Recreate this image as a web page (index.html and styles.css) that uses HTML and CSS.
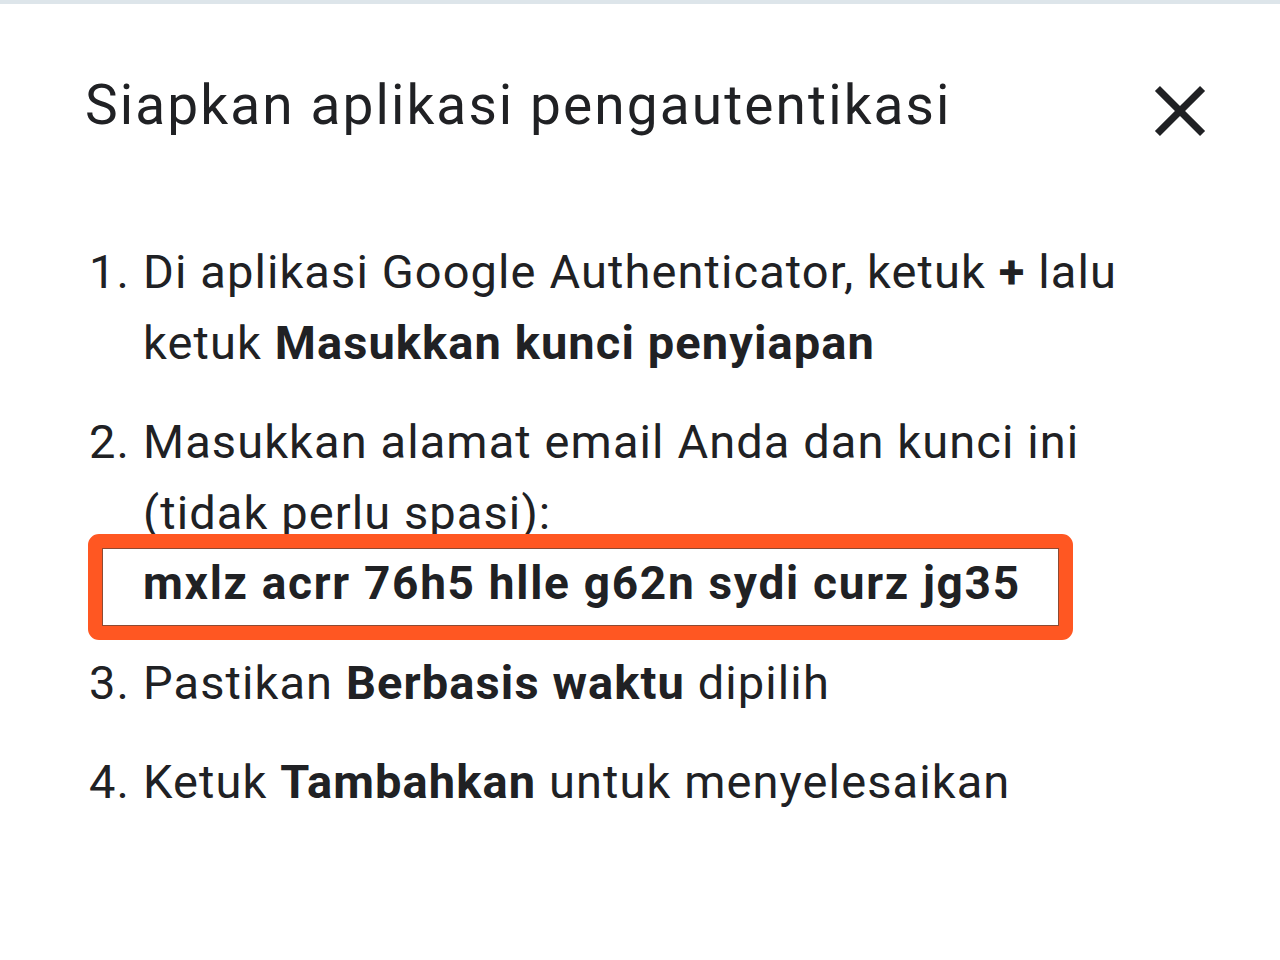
FILE: index.html
```html
<!DOCTYPE html>
<html lang="id">
<head>
<meta charset="utf-8">
<title>Siapkan aplikasi pengautentikasi</title>
<link rel="stylesheet" href="styles.css">
</head>
<body>
<div class="topline"></div>
<div class="dialog">
  <div class="header">
    <h1 class="title">Siapkan aplikasi pengautentikasi</h1>
    <button class="close" aria-label="Tutup">
      <svg viewBox="0 0 24 24" width="86" height="86"><path fill="#202124" d="M19 6.41L17.59 5 12 10.59 6.41 5 5 6.41 10.59 12 5 17.59 6.41 19 12 13.41 17.59 19 19 17.59 13.41 12z"/></svg>
    </button>
  </div>
  <ol class="steps">
    <li class="step"><span class="num">1.</span><div class="txt">Di aplikasi Google Authenticator, ketuk <b>+</b> lalu ketuk <b>Masukkan kunci penyiapan</b></div></li>
    <li class="step"><span class="num">2.</span><div class="txt">Masukkan alamat email Anda dan kunci ini (tidak perlu spasi):<div class="key">mxlz acrr 76h5 hlle g62n sydi curz jg35</div></div></li>
    <li class="step"><span class="num">3.</span><div class="txt">Pastikan <b>Berbasis waktu</b> dipilih</div></li>
    <li class="step"><span class="num">4.</span><div class="txt">Ketuk <b>Tambahkan</b> untuk menyelesaikan</div></li>
  </ol>
</div>
</body>
</html>
```

FILE: styles.css
```css
html, body {
  margin: 0;
  padding: 0;
  background: #ffffff;
}
body {
  font-family: Roboto, "Liberation Sans", sans-serif;
  color: #202124;
  width: 1280px;
  height: 960px;
  overflow: hidden;
}
.topline {
  height: 4px;
  background: #dde5ea;
}
.dialog {
  padding: 69px 0 0 85px;
}
.header {
  display: flex;
  align-items: flex-start;
  justify-content: space-between;
  height: 64px;
}
.title {
  margin: 0;
  font-size: 55px;
  font-weight: 400;
  line-height: 64px;
  color: #202124;
  letter-spacing: 2.1px;
  white-space: nowrap;
}
.close {
  border: 0;
  background: none;
  padding: 0;
  margin: -5px 57px 0 0;
  width: 86px;
  height: 86px;
  display: block;
  flex: none;
}
.close svg { display: block; }
.steps {
  list-style: none;
  margin: 99px 0 0 0;
  padding: 0;
  font-size: 47px;
  line-height: 71px;
  color: #202124;
  letter-spacing: 1.1px;
}
.step {
  display: flex;
  margin-bottom: 28px;
}
.num {
  width: 54px;
  flex: none;
  padding-left: 4px;
}
.txt {
  width: 1050px;
}
.txt b {
  font-weight: 700;
  color: #202124;
}
.key {
  position: relative;
  font-weight: 700;
  height: 71px;
  font-size: 46px;
  letter-spacing: 1.7px;
}
.key::after {
  content: "";
  position: absolute;
  top: -14px;
  left: -55px;
  width: 957px;
  height: 78px;
  border: 14px solid #ff5722;
  border-radius: 11px;
  box-shadow: inset 0 0 0 1px #8c4a33;
}
```
